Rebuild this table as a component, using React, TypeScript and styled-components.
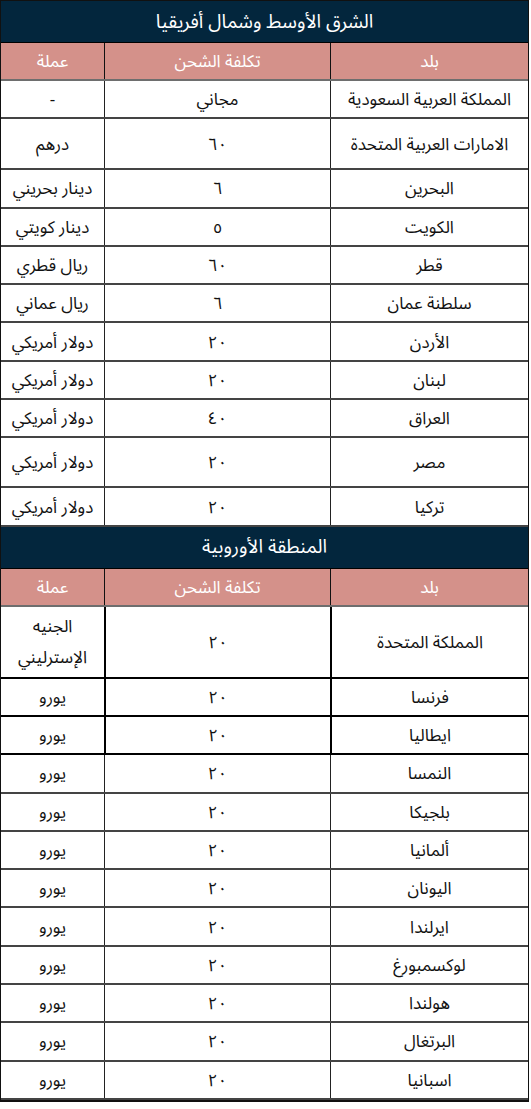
import React from 'react';
import styled, { createGlobalStyle } from 'styled-components';

const GlobalStyle = createGlobalStyle`
  html, body {
    margin: 0;
    padding: 0;
    background: #ffffff;
  }
  body {
    font-family: 'Noto Sans Arabic', 'DejaVu Sans', 'Noto Sans', sans-serif;
  }
`;

const Table = styled.div`
  direction: rtl;
  width: 529px;
  box-sizing: border-box;
  border: 1px solid #111;
  border-bottom-width: 2px;
`;

const SectionTitle = styled.div`
  height: 42px;
  box-sizing: border-box;
  display: flex;
  align-items: center;
  justify-content: center;
  background-color: #03263d;
  color: #ffffff;
  font-size: 19px;
  border-bottom: 1px solid #000;
`;

const Row = styled.div<{ $h: number; $strong?: boolean }>`
  display: grid;
  grid-template-columns: 198px 226px 1fr;
  height: ${(p) => p.$h}px;
  box-sizing: border-box;
  border-bottom: 2px solid ${(p) => (p.$strong ? '#000' : '#444')};
`;

const HeadRow = styled(Row)`
  background-color: #d4918a;
  color: #ffffff;
  border-bottom-color: #6e6e6e;
`;

const Cell = styled.div<{ $strong?: boolean }>`
  display: flex;
  align-items: center;
  justify-content: center;
  text-align: center;
  font-size: 17px;
  line-height: 30px;
  padding-top: 2px;
  color: #111;
  border-left: ${(p) => (p.$strong ? '2px solid #000' : '1px solid #222')};

  &:last-child {
    border-left: none;
  }
`;

const HeadCell = styled(Cell)`
  color: #ffffff;
  border-left-color: #111;
`;

const Stack = styled.div`
  display: flex;
  flex-direction: column;
  align-items: center;
  gap: 2px;
  line-height: 29px;
`;

type Entry = {
  country: string;
  cost: string;
  currency: React.ReactNode;
  h?: number;
  strong?: boolean;
};

const H = 38.3;

const middleEast: Entry[] = [
  { country: 'المملكة العربية السعودية', cost: 'مجاني', currency: '-' },
  { country: 'الامارات العربية المتحدة', cost: '٦٠', currency: 'درهم', h: 51 },
  { country: 'البحرين', cost: '٦', currency: 'دينار بحريني' },
  { country: 'الكويت', cost: '٥', currency: 'دينار كويتي' },
  { country: 'قطر', cost: '٦٠', currency: 'ريال قطري' },
  { country: 'سلطنة عمان', cost: '٦', currency: 'ريال عماني' },
  { country: 'الأردن', cost: '٢٠', currency: 'دولار أمريكي' },
  { country: 'لبنان', cost: '٢٠', currency: 'دولار أمريكي' },
  { country: 'العراق', cost: '٤٠', currency: 'دولار أمريكي' },
  { country: 'مصر', cost: '٢٠', currency: 'دولار أمريكي', h: 50 },
  { country: 'تركيا', cost: '٢٠', currency: 'دولار أمريكي' },
];

const europe: Entry[] = [
  {
    country: 'المملكة المتحدة',
    cost: '٢٠',
    currency: (
      <Stack>
        <span>الجنيه</span>
        <span>الإسترليني</span>
      </Stack>
    ),
    h: 72,
    strong: true,
  },
  { country: 'فرنسا', cost: '٢٠', currency: 'يورو', strong: true },
  { country: 'ايطاليا', cost: '٢٠', currency: 'يورو', strong: true },
  { country: 'النمسا', cost: '٢٠', currency: 'يورو' },
  { country: 'بلجيكا', cost: '٢٠', currency: 'يورو' },
  { country: 'ألمانيا', cost: '٢٠', currency: 'يورو' },
  { country: 'اليونان', cost: '٢٠', currency: 'يورو' },
  { country: 'ايرلندا', cost: '٢٠', currency: 'يورو' },
  { country: 'لوكسمبورغ', cost: '٢٠', currency: 'يورو' },
  { country: 'هولندا', cost: '٢٠', currency: 'يورو' },
  { country: 'البرتغال', cost: '٢٠', currency: 'يورو' },
  { country: 'اسبانيا', cost: '٢٠', currency: 'يورو' },
];

function Section({ title, rows }: { title: string; rows: Entry[] }) {
  return (
    <>
      <SectionTitle>{title}</SectionTitle>
      <HeadRow $h={38}>
        <HeadCell>بلد</HeadCell>
        <HeadCell>تكلفة الشحن</HeadCell>
        <HeadCell>عملة</HeadCell>
      </HeadRow>
      {rows.map((r, i) => (
        <Row key={i} $h={r.h ?? H} $strong={r.strong}>
          <Cell $strong={r.strong}>{r.country}</Cell>
          <Cell $strong={r.strong}>{r.cost}</Cell>
          <Cell>{r.currency}</Cell>
        </Row>
      ))}
    </>
  );
}

export default function App() {
  return (
    <>
      <GlobalStyle />
      <Table>
        <Section title="الشرق الأوسط وشمال أفريقيا" rows={middleEast} />
        <Section title="المنطقة الأوروبية" rows={europe} />
      </Table>
    </>
  );
}
